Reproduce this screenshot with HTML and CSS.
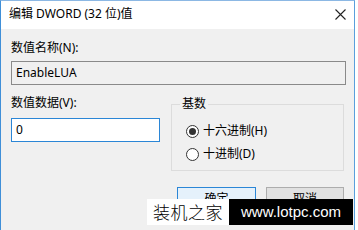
FILE: index.html
```html
<!DOCTYPE html>
<html lang="zh-CN">
<head>
<meta charset="utf-8">
<title>编辑 DWORD (32 位)值</title>
<link rel="stylesheet" href="styles.css">
</head>
<body>
<div class="window">
  <div class="titlebar">
    <span class="title">编辑 DWORD (32 位)值</span>
    <svg class="close" width="11" height="11" viewBox="0 0 11 11"><path d="M0.5 0.5 L10.5 10.5 M10.5 0.5 L0.5 10.5" stroke="#222" stroke-width="1.1" fill="none"/></svg>
  </div>
  <div class="content">
    <div class="label">数值名称(N):</div>
    <div class="field readonly">EnableLUA</div>
    <div class="row">
      <div class="col">
        <div class="label">数值数据(V):</div>
        <div class="field focused">0</div>
      </div>
      <fieldset class="group">
        <legend>基数</legend>
        <div class="radio"><span class="dot checked"></span><span>十六进制(H)</span></div>
        <div class="radio second"><span class="dot"></span><span>十进制(D)</span></div>
      </fieldset>
    </div>
    <div class="buttons">
      <div class="btn default">确定</div>
      <div class="btn">取消</div>
    </div>
  </div>
</div>
<div class="watermark"><span class="wm-cn">装机之家</span><span class="wm-url">www.lotpc.com</span></div>
</body>
</html>
```

FILE: styles.css
```css
html, body {
  margin: 0;
  padding: 0;
  background: #ffffff;
  overflow: hidden;
}
body {
  font-family: "Noto Sans", "Noto Sans CJK SC", sans-serif;
  font-size: 12px;
  color: #000;
}
.window {
  width: 353px;
  height: 229px;
  overflow: hidden;
  border-top: 1px solid #8cb8e4;
  border-left: 1px solid #3f8fd8;
  border-right: 1px solid #5a9fdc;
  background: #f0f0f0;
}
.titlebar {
  height: 26px;
  padding-bottom: 2px;
  background: #ffffff;
  display: flex;
  align-items: center;
  justify-content: space-between;
  padding-left: 8px;
  padding-right: 8px;
}
.title {
  font-size: 12px;
  line-height: 16px;
  color: #000;
}
.close {
  display: block;
}
.content {
  padding: 11px 8px 0 10px;
}
.label {
  line-height: 16px;
  height: 16px;
}
.field {
  box-sizing: border-box;
  height: 24px;
  line-height: 22px;
  margin-top: 5px;
  padding-left: 4px;
  border: 1px solid #999999;
}
.readonly {
  background: #f0f0f0;
  border-color: #8a8a8a;
}
.focused {
  width: 149px;
  margin-top: 7px;
  background: #ffffff;
  border-color: #2b86d6;
}
.row {
  display: flex;
  align-items: flex-start;
  margin-top: 10px;
}
.col {
  width: 149px;
}
.group {
  flex: 1;
  margin: 1px 2px 0 11px;
  padding: 11px 8px 8px 8px;
  border: 1px solid #dcdcdc;
  min-width: 0;
}
.group legend {
  padding: 0 2px;
  line-height: 16px;
}
.radio {
  display: flex;
  align-items: center;
  height: 16px;
  line-height: 16px;
}
.radio.second {
  margin-top: 7px;
}
.dot {
  box-sizing: border-box;
  width: 13px;
  height: 13px;
  border: 1px solid #333333;
  border-radius: 50%;
  background: #ffffff;
  margin-left: 6px;
  margin-right: 4px;
  display: flex;
  align-items: center;
  justify-content: center;
}
.dot.checked::after {
  content: "";
  width: 7px;
  height: 7px;
  border-radius: 50%;
  background: #333333;
}
.buttons {
  display: flex;
  justify-content: flex-end;
  gap: 10px;
  margin-top: 16px;
  margin-right: 2px;
}
.btn {
  box-sizing: border-box;
  width: 78px;
  height: 23px;
  line-height: 21px;
  text-align: center;
  border: 1px solid #adadad;
  background: #e1e1e1;
}
.btn.default {
  width: 79px;
  border: 1px solid #2b86d6;
  background: #e5f1fb;
}
.watermark {
  position: absolute;
  left: 147px;
  top: 199px;
  height: 26px;
  display: flex;
}
.wm-cn {
  width: 82px;
  background: #ffffff;
  color: #000;
  font-family: "Noto Sans CJK SC", sans-serif;
  font-weight: 300;
  font-size: 17px;
  line-height: 26px;
  letter-spacing: 0.5px;
  text-align: center;
}
.wm-url {
  width: 124px;
  background: #000000;
  color: #ffffff;
  font-family: "Liberation Sans", sans-serif;
  font-size: 15px;
  line-height: 26px;
  text-align: center;
}
```
